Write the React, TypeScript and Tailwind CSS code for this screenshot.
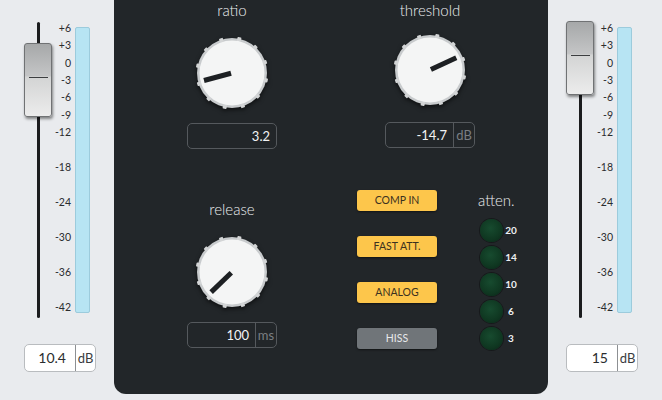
import React from "react";

const upperScale = ["+6", "+3", "0", "-3", "-6", "-9", "-12"];
const lowerScale = ["-18", "-24", "-30", "-36", "-42"];

function Knob({ angle }: { angle: number }) {
  const rad = (angle * Math.PI) / 180;
  const cos = Math.cos(rad);
  const sin = Math.sin(rad);
  const teeth = Array.from({ length: 12 }, (_, i) => i * 30 + 12);
  return (
    <svg width={74} height={74} viewBox="-37 -37 74 74" className="drop-shadow-[0_2px_2px_rgba(0,0,0,0.6)]">
      <circle r={35} fill="#c8cbcd" />
      {teeth.map((a) => (
        <rect key={a} x={-2} y={-36.5} width={4} height={4} rx={0.8} fill="#d3d5d6" transform={`rotate(${a})`} />
      ))}
      <circle r={32.5} fill="#f4f5f5" />
      <line x1={cos * 1} y1={sin * 1} x2={cos * 29} y2={sin * 29} stroke="#1d2023" strokeWidth={5} />
    </svg>
  );
}

function ValueBox({ value, unit }: { value: string; unit?: string }) {
  return (
    <div className="flex h-[26px] w-[90px] rounded-[5px] border border-[#55595d] text-[13px] text-[#f2f3f4]">
      <div className="flex-1 pr-[6px] text-right leading-[24px]">{value}</div>
      {unit && (
        <div className="w-[21px] border-l border-[#55595d] text-center leading-[24px] text-[#7b7f83]">{unit}</div>
      )}
    </div>
  );
}

function Fader({ pad, handleTop, value }: { pad: string; handleTop: string; value: string }) {
  return (
    <div className={`flex w-[114px] flex-col pt-[20px] ${pad}`}>
      <div className="flex items-start">
        {/* fader */}
        <div className="relative mt-[2px] flex h-[296px] w-[28px] justify-center">
          <div className="h-full w-[3px] rounded-full bg-[#1b1c1e]" />
          <div
            className={`absolute left-0 ${handleTop} h-[74px] w-[28px] rounded-[3px] border border-[#707274] bg-[linear-gradient(180deg,#a6a8a9_0%,#c4c5c6_44%,#d3d4d4_46%,#ececec_100%)] shadow-[1px_2px_3px_rgba(0,0,0,0.45)]`}
          >
            <div className="mx-auto mt-[33px] h-[1px] w-[19px] bg-[#3c3e40]" />
          </div>
        </div>
        {/* scale */}
        <div className="mt-[0.33px] w-[20px] pr-[1px] text-[10.5px] text-[#2a2c2e]">
          {upperScale.map((s) => (
            <div key={s} className="flex h-[17.33px] items-center justify-end">{s}</div>
          ))}
          <div className="h-[8.83px]" />
          {lowerScale.map((s) => (
            <div key={s} className="flex h-[35px] items-center justify-end">{s}</div>
          ))}
        </div>
        {/* meter */}
        <div className="ml-[3px] mt-[7px] h-[286px] w-[15px] rounded-[2px] border border-[#9ccbdc] bg-[#b7e4f3]" />
      </div>
      <div className="mt-[19px] flex h-[28px] w-[72px] rounded-[5px] border border-[#b9bcbf] bg-white text-[14px] text-[#2a2c2e]">
        <div className="flex-1 pr-[9px] text-right leading-[26px]">{value}</div>
        <div className="w-[20px] border-l border-[#8d9093] text-center text-[13px] leading-[26px] text-[#3a3c3e]">dB</div>
      </div>
    </div>
  );
}

function Button({ label, on }: { label: string; on: boolean }) {
  return (
    <div
      className={`flex h-[21px] w-[80px] items-center justify-center rounded-[3px] text-[10.5px] shadow-[0_1px_2px_rgba(0,0,0,0.5)] ${
        on ? "bg-[#fdc64b] text-[#3b3120]" : "bg-[#707579] text-[#e6e8ea]"
      }`}
    >
      {label}
    </div>
  );
}

export default function App() {
  const leds = ["20", "14", "10", "6", "3"];
  return (
    <div className="flex h-[400px] w-[662px] overflow-hidden bg-[#e9ebee] font-[Lato,sans-serif]">
      <Fader pad="pl-[24px]" handleTop="top-[21px]" value="10.4" />

      {/* Compressor panel */}
      <div className="h-[394px] w-[434px] rounded-b-[12px] bg-[#222629] text-[#eceef0]">
        <div className="flex pl-[73px]">
          <div className="flex w-[90px] flex-col items-center">
            <div className="text-[15px] font-light leading-[20px]">ratio</div>
            <div className="mt-[16px]"><Knob angle={165} /></div>
            <div className="mt-[13px]"><ValueBox value="3.2" /></div>
          </div>
          <div className="ml-[108px] flex w-[90px] flex-col items-center">
            <div className="text-[15px] font-light leading-[20px]">threshold</div>
            <div className="mt-[13px]"><Knob angle={-25} /></div>
            <div className="mt-[15px]"><ValueBox value="-14.7" unit="dB" /></div>
          </div>
        </div>

        <div className="mt-[41px] flex items-start">
          <div className="ml-[73px] flex w-[90px] flex-col items-center pt-[9px]">
            <div className="text-[15px] font-light leading-[20px]">release</div>
            <div className="mt-[16px]"><Knob angle={136} /></div>
            <div className="mt-[13px]"><ValueBox value="100" unit="ms" /></div>
          </div>

          <div className="ml-[80px] flex flex-col gap-[25px]">
            <Button label="COMP IN" on />
            <Button label="FAST ATT." on />
            <Button label="ANALOG" on />
            <Button label="HISS" on={false} />
          </div>

          <div className="ml-[41px] w-[44px]">
            <div className="text-[15px] font-light leading-[20px]">atten.</div>
            <div className="mt-[6.5px]">
              {leds.map((l) => (
                <div key={l} className="flex h-[27px] items-center">
                  <div className="ml-[2px] h-[23px] w-[23px] rounded-full bg-[radial-gradient(circle_at_45%_40%,#174b2f_0%,#0f3721_60%,#0a2217_100%)] shadow-[0_0_0_1px_rgba(0,0,0,0.35)]" />
                  <div className="ml-[1px] w-[14px] text-center text-[10px] font-bold text-[#eef0f1]">{l}</div>
                </div>
              ))}
            </div>
          </div>
        </div>
      </div>

      <Fader pad="pl-[18px]" handleTop="top-[-1px]" value="15" />
    </div>
  );
}
